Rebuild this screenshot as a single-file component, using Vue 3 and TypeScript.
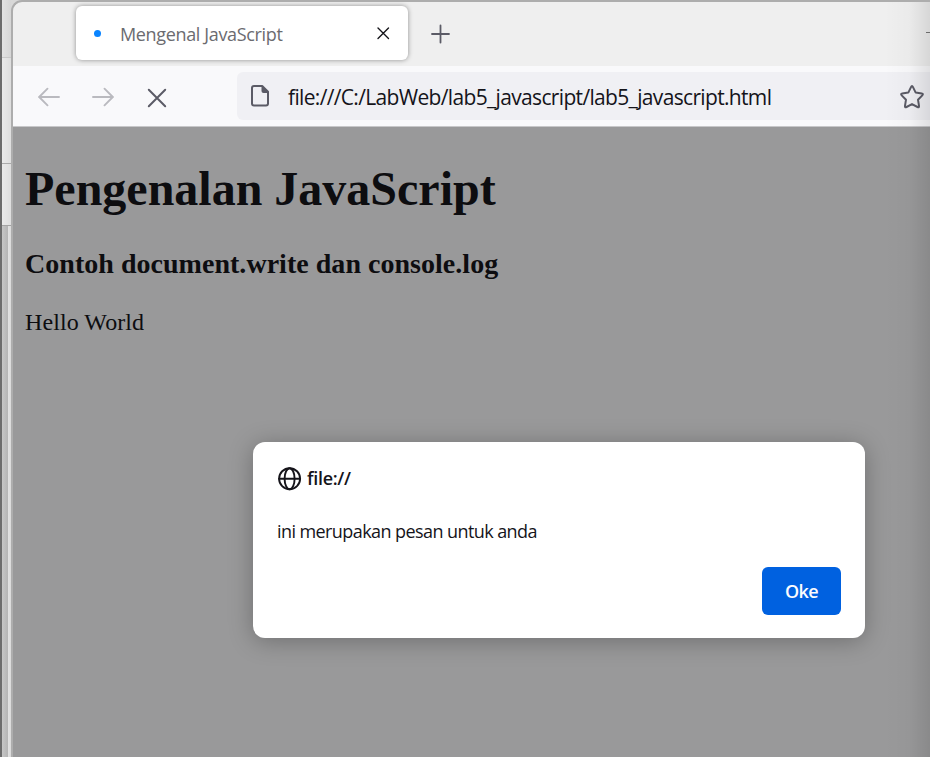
<script setup lang="ts">
const tabTitle: string = 'Mengenal JavaScript'
const url: string = 'file:///C:/LabWeb/lab5_javascript/lab5_javascript.html'
const dialog: { origin: string; message: string; accept: string } = {
  origin: 'file://',
  message: 'ini merupakan pesan untuk anda',
  accept: 'Oke',
}
</script>

<template>
  <div class="desktop">
    <div class="behind">
      <div class="behind-title"></div>
      <div class="behind-bar"></div>
      <div class="behind-tools"></div>
      <div class="behind-body"></div>
    </div>
    <div class="window">
      <header class="tabs">
        <div class="tab">
          <i class="dot"></i>
          <span class="tab-title">{{ tabTitle }}</span>
          <svg class="tab-close" width="14" height="14" viewBox="0 0 14 14"><path d="M2 2l10.500 10.500M12.500 2L2 12.500" /></svg>
        </div>
        <svg class="plus" width="20" height="20" viewBox="0 0 20 20"><path d="M10.500 1.500v17M2 10h17" /></svg>
        <i class="minimize"></i>
      </header>
      <nav class="toolbar">
        <svg class="arrow back" width="24" height="22" viewBox="0 0 24 22"><path d="M22 11H2M10.500 2.700L2.200 11l8.300 8.300" /></svg>
        <svg class="arrow forward" width="24" height="22" viewBox="0 0 24 22"><path d="M2 11h20M13.500 2.700L21.800 11l-8.300 8.300" /></svg>
        <svg class="stop" width="20" height="20" viewBox="0 0 20 20"><path d="M1.800 1.800l16.400 16.400M18.200 1.800L1.800 18.200" /></svg>
        <div class="address">
          <svg class="file" width="20" height="24" viewBox="0 0 20 24">
            <path class="file-line" d="M4 2h8.200L18 7.800V19.500a2 2 0 0 1-2 2H4a2 2 0 0 1-2-2V4a2 2 0 0 1 2-2z" />
            <path class="file-fold" d="M11.500 2h1L18.500 8v1H13.500a2 2 0 0 1-2-2z" />
          </svg>
          <span class="url">{{ url }}</span>
          <svg class="star" width="26" height="26" viewBox="0 0 26 26"><path d="M12 3.100q1-2 2 0l2.700 5.500 6 .9q2 .4.600 1.900l-4.300 4.300 1 6.100q.3 2-1.500 1.200L13 20.100l-5.500 2.900q-1.800.8-1.500-1.200l1-6.100-4.300-4.300q-1.400-1.500.6-1.900l6-.9z" /></svg>
        </div>
      </nav>
      <main class="page">
        <h1>Pengenalan JavaScript</h1>
        <h3>Contoh document.write dan console.log</h3>
        <p class="hello">Hello World</p>
        <section class="dialog">
          <div class="origin">
            <svg class="globe" width="25" height="24" viewBox="0 0 25 24">
              <circle cx="12.600" cy="11.700" r="10.500" /><ellipse cx="12.600" cy="11.700" rx="5" ry="10.500" /><path d="M2.100 11.700h21" />
            </svg>
            <strong>{{ dialog.origin }}</strong>
          </div>
          <p class="message">{{ dialog.message }}</p>
          <button class="accept">{{ dialog.accept }}</button>
        </section>
      </main>
    </div>
    <div class="edge-shade"></div>
  </div>
</template>

<style>
body { margin: 0; overflow: hidden; }
</style>

<style scoped>
* { box-sizing: border-box; }
svg { display: block; flex: none; fill: none; stroke-linecap: round; stroke-linejoin: round; }
.desktop { position: relative; display: flex; width: 930px; height: 757px; overflow: hidden; background: linear-gradient(90deg, #6c6c6c 2px, #d8d8d8 2px); font-family: "Open Sans", "Noto Sans", sans-serif; }
.behind { width: 9px; margin-left: 2px; flex: none; display: flex; flex-direction: column; }
.behind-title { height: 58px; background: linear-gradient(90deg, #e3e3e3, #d6d6d6); border-bottom: 1px solid #c9c9c9; }
.behind-bar { height: 106px; background: linear-gradient(90deg, #eaeaea, #dedede); border-bottom: 1px solid #aaa; }
.behind-tools { height: 62px; background: linear-gradient(90deg, #eaeaea, #dedede); border-bottom: 1px solid #a4a4a4; }
.behind-body { flex: 1; background: linear-gradient(90deg, #c6c6c6, #b4b4b4 6px, #e2e2e2 6px, #dadada); }
.window { flex: 1; min-width: 0; display: flex; flex-direction: column; border: solid #adadad; border-width: 2px 0 0 2px; border-radius: 11px 0 0 0; overflow: hidden; background: #efefef; }
.tabs { height: 64px; flex: none; display: flex; align-items: flex-start; padding: 4px 0 0 63px; }
.tab { width: 332px; height: 54px; display: flex; align-items: center; padding: 0 18px; background: #fff; border-radius: 6px; box-shadow: 0 0 5px rgba(0, 0, 0, .4); }
.dot { width: 7px; height: 7px; border-radius: 50%; background: #0a84ff; }
.tab-title { flex: 1; margin: 1px 0 0 19px; font-size: 18px; line-height: 26px; color: #6b6b70; white-space: nowrap; letter-spacing: -.35px; }
.tab-close { stroke: #15141a; stroke-width: 1.400; }
.plus { margin: 18px 0 0 22px; stroke: #5b5b66; stroke-width: 1.800; }
.minimize { width: 4px; height: 1px; margin: 26px 0 0 auto; background: #777; }
.toolbar { height: 61px; flex: none; display: flex; align-items: center; background: #f9f9fb; border-bottom: 1px solid #c7c7c9; padding-left: 24px; }
.arrow { margin-top: 2px; stroke: #bababf; stroke-width: 1.900; }
.forward { margin-left: 30px; }
.stop { margin: 3px 0 0 32px; stroke: #5b5b66; stroke-width: 2; }
.address { flex: 1; min-width: 0; height: 48px; margin-left: 70px; display: flex; align-items: center; padding: 0 5px 0 13px; background: #f0f0f4; border-radius: 6px 0 0 6px; }
.file-line { stroke: #5b5b66; stroke-width: 2; }
.file-fold { fill: #5b5b66; }
.url { flex: 1; margin: 2px 0 0 18px; font-size: 21px; line-height: 30px; color: #15141a; white-space: nowrap; letter-spacing: -.66px; }
.star { margin-top: 2px; stroke: #5b5b66; stroke-width: 2; }
.page { position: relative; flex: 1; padding: 0 12px; background: #99999a; color: #0d0d10; font-family: "Liberation Serif", serif; }
h1 { margin: 34px 0 0; font-size: 48px; line-height: 56px; white-space: nowrap; }
h3 { margin: 31px 0 0; font-size: 28px; line-height: 32px; white-space: nowrap; letter-spacing: .03px; }
.hello { margin: 28px 0 0; font-size: 24px; line-height: 28px; letter-spacing: .08px; }
.dialog { position: absolute; left: 240px; top: 315px; width: 612px; height: 196px; padding: 24px 24px 23px; display: flex; flex-direction: column; background: #fff; border-radius: 12px; box-shadow: 0 3px 24px rgba(0, 0, 0, .28); color: #15141a; font-family: "Open Sans", "Noto Sans", sans-serif; font-size: 18px; line-height: 25px; }
.origin { display: flex; align-items: center; gap: 5px; }
.origin strong { font-weight: 600; letter-spacing: -.3px; }
.globe { stroke: #15141a; stroke-width: 1.900; }
.message { margin: 28px 0 0; white-space: nowrap; letter-spacing: -.58px; }
.accept { width: 79px; height: 48px; margin: auto 0 0 auto; padding: 0; border: 0; border-radius: 6px; flex: none; background: #0061e0; color: #fbfbfe; font: 600 18px/25px "Open Sans", sans-serif; letter-spacing: -.6px; }
.edge-shade { position: absolute; right: 0; top: 2px; bottom: 0; width: 46px; background: linear-gradient(90deg, transparent, rgba(0, 0, 0, .02) 55%, rgba(0, 0, 0, .1)); pointer-events: none; }
</style>
